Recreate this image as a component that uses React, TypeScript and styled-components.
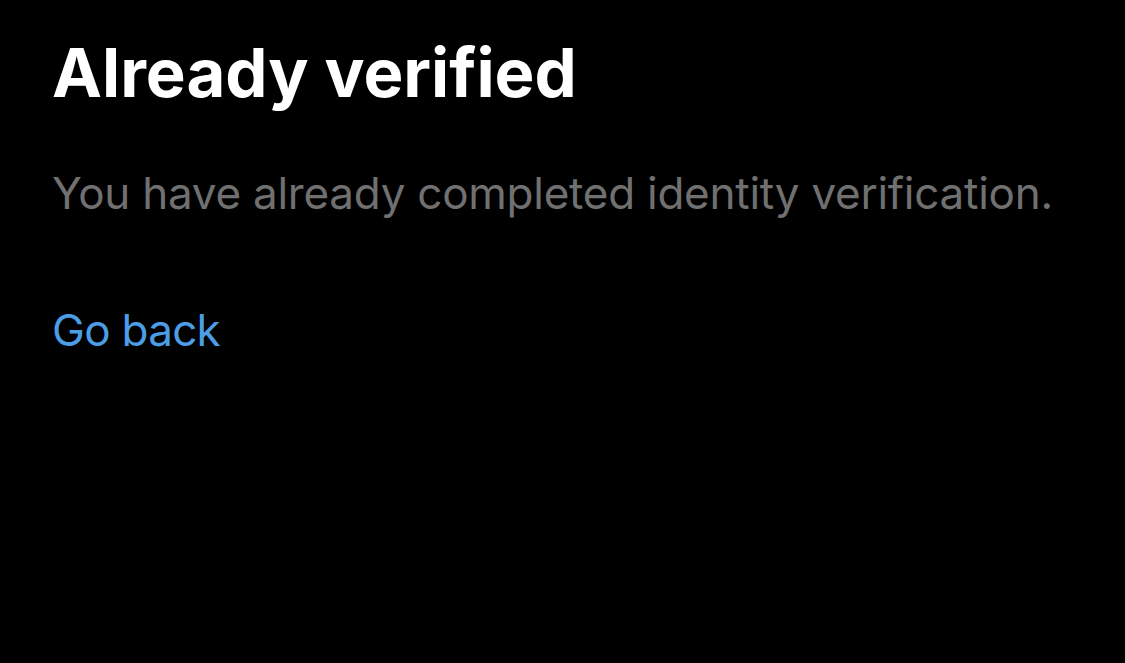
import React from "react";
import styled, { createGlobalStyle } from "styled-components";

const Global = createGlobalStyle`
  html, body { margin: 0; padding: 0; background: #000; }
  body { font-family: Inter, "Noto Sans", sans-serif; }
`;

const Page = styled.main`
  min-height: 663px;
  background: #000;
  padding: 33px 52px 0 52px;
  box-sizing: border-box;
  display: flex;
  flex-direction: column;
  align-items: flex-start;
`;

const Title = styled.h1`
  margin: 0;
  font-size: 67px;
  line-height: 80px;
  font-weight: 700;
  color: #fff;
  letter-spacing: 0;
`;

const Body = styled.p`
  margin: 52px 0 0 0;
  font-size: 44px;
  line-height: 56px;
  font-weight: 400;
  color: #707070;
  letter-spacing: -0.25px;
`;

const Link = styled.a`
  margin-top: 81px;
  font-size: 44px;
  line-height: 56px;
  color: #4b9ee6;
  text-decoration: none;
  letter-spacing: -0.7px;
  cursor: pointer;
`;

export default function App() {
  return (
    <>
      <Global />
      <Page>
        <Title>Already verified</Title>
        <Body>You have already completed identity verification.</Body>
        <Link>Go back</Link>
      </Page>
    </>
  );
}
